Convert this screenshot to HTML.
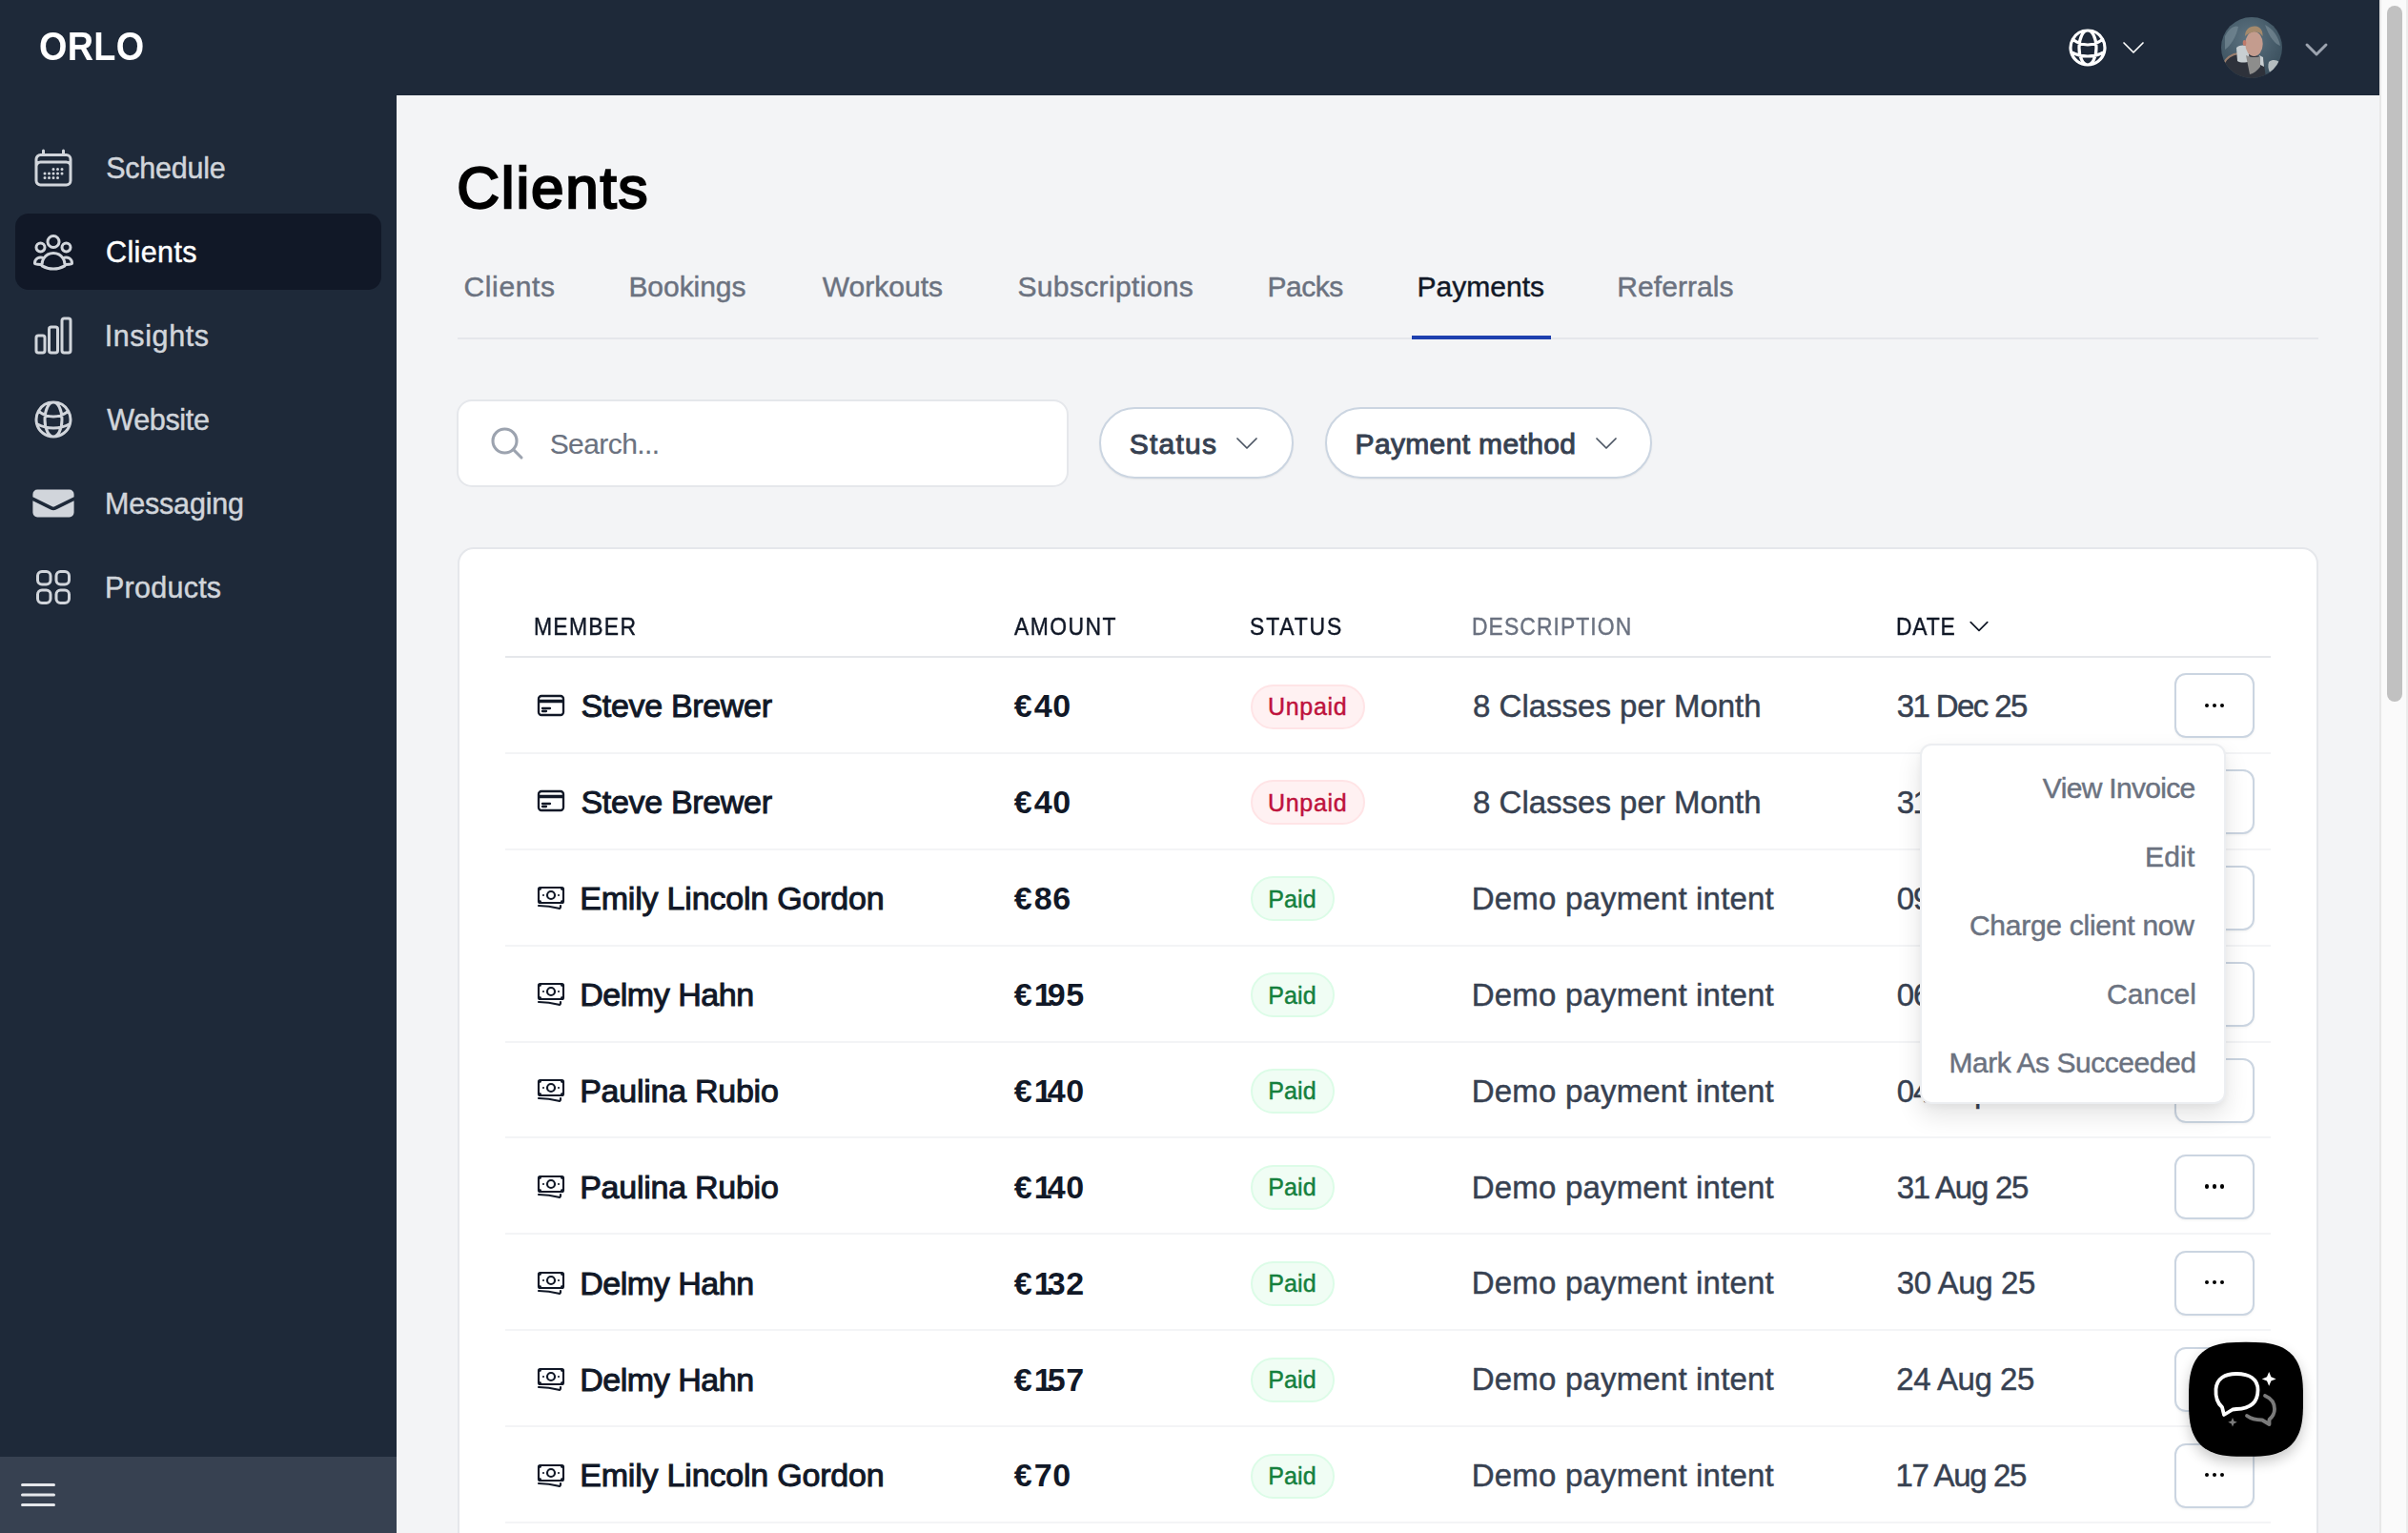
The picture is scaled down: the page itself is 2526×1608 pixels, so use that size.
<!DOCTYPE html><html><head><meta charset="utf-8"><style>
html,body{margin:0;padding:0;width:2526px;height:1608px;overflow:hidden;background:#f3f4f6;}
body{position:relative;font-family:"Liberation Sans",sans-serif;}
.t{position:absolute;white-space:nowrap;}
.i{position:absolute;display:block;overflow:visible;}
.b{position:absolute;box-sizing:border-box;}
</style></head><body>
<div class="b" style="left:0;top:0;width:2496px;height:100px;background:#1e2939"></div>
<div class="b" style="left:0;top:100px;width:416px;height:1508px;background:#1e2939"></div>
<div class="b" style="left:0;top:1528px;width:416px;height:80px;background:#374151"></div>
<svg class="i" style="left:16px;top:1544px;width:48px;height:48px;" viewBox="0 0 24 24" fill="none" stroke="#e5e7eb" stroke-width="1.5"><path stroke-linecap="round" stroke-linejoin="round" d="M3.75 6.75h16.5M3.75 12h16.5m-16.5 5.25h16.5"/></svg>
<div class="b" style="left:2496px;top:0;width:30px;height:1608px;background:#fafafa;border-left:2px solid #e8e8e8"></div>
<div class="b" style="left:2524px;top:0;width:2px;height:1608px;background:#ececec"></div>
<div class="b" style="left:2504px;top:6px;width:16px;height:730px;background:#c1c1c1;border-radius:8px"></div>
<div class="t" style="left:41.49px;top:28.45px;font-size:42px;line-height:42px;color:#ffffff;font-weight:700;letter-spacing:0.360px;transform:scaleX(0.9);transform-origin:0 0;">ORLO</div>
<svg class="i" style="left:32px;top:152px;width:48px;height:48px;" viewBox="0 0 24 24" fill="none" stroke="#d1d5db" stroke-width="1.5"><path stroke-linecap="round" stroke-linejoin="round" d="M6.75 3v2.25M17.25 3v2.25M3 18.75V7.5a2.25 2.25 0 0 1 2.25-2.25h13.5A2.25 2.25 0 0 1 21 7.5v11.25m-18 0A2.25 2.25 0 0 0 5.25 21h13.5A2.25 2.25 0 0 0 21 18.75m-18 0v-7.5A2.25 2.25 0 0 1 5.25 9h13.5A2.25 2.25 0 0 1 21 11.25v7.5m-9-6h.008v.008H12v-.008ZM12 15h.008v.008H12V15Zm0 2.25h.008v.008H12v-.008ZM9.75 15h.008v.008H9.75V15Zm0 2.25h.008v.008H9.75v-.008ZM7.5 15h.008v.008H7.5V15Zm0 2.25h.008v.008H7.5v-.008Zm6.75-4.5h.008v.008h-.008v-.008Zm0 2.25h.008v.008h-.008V15Zm0 2.25h.008v.008h-.008v-.008Zm2.25-4.5h.008v.008H16.5v-.008Zm0 2.25h.008v.008H16.5V15Z"/></svg>
<div class="t" style="left:111.13px;top:161.28px;font-size:30.5px;line-height:30.5px;color:#d1d5db;font-weight:400;letter-spacing:-0.217px;-webkit-text-stroke:0.45px currentColor;">Schedule</div>
<div class="b" style="left:16px;top:224px;width:384px;height:80px;background:#111827;border-radius:14px"></div>
<svg class="i" style="left:32px;top:240px;width:48px;height:48px;" viewBox="0 0 24 24" fill="none" stroke="#d1d5db" stroke-width="1.5"><path stroke-linecap="round" stroke-linejoin="round" d="M18 18.72a9.094 9.094 0 0 0 3.741-.479 3 3 0 0 0-4.682-2.72m.94 3.198.001.031c0 .225-.012.447-.037.666A11.944 11.944 0 0 1 12 21c-2.17 0-4.207-.576-5.963-1.584A6.062 6.062 0 0 1 6 18.719m12 0a5.971 5.971 0 0 0-.941-3.197m0 0A5.995 5.995 0 0 0 12 12.75a5.995 5.995 0 0 0-5.058 2.772m0 0a3 3 0 0 0-4.681 2.72 8.986 8.986 0 0 0 3.74.477m.94-3.197a5.971 5.971 0 0 0-.94 3.197M15 6.75a3 3 0 1 1-6 0 3 3 0 0 1 6 0Zm6 3a2.25 2.25 0 1 1-4.5 0 2.25 2.25 0 0 1 4.5 0Zm-13.5 0a2.25 2.25 0 1 1-4.5 0 2.25 2.25 0 0 1 4.5 0Z"/></svg>
<div class="t" style="left:110.97px;top:249.28px;font-size:30.5px;line-height:30.5px;color:#ffffff;font-weight:400;letter-spacing:0.390px;-webkit-text-stroke:0.45px currentColor;">Clients</div>
<svg class="i" style="left:32px;top:328px;width:48px;height:48px;" viewBox="0 0 24 24" fill="none" stroke="#d1d5db" stroke-width="1.5"><path stroke-linecap="round" stroke-linejoin="round" d="M3 13.125C3 12.504 3.504 12 4.125 12h2.25c.621 0 1.125.504 1.125 1.125v6.75C7.5 20.496 6.996 21 6.375 21h-2.25A1.125 1.125 0 0 1 3 19.875v-6.75ZM9.75 8.625c0-.621.504-1.125 1.125-1.125h2.25c.621 0 1.125.504 1.125 1.125v11.25c0 .621-.504 1.125-1.125 1.125h-2.25a1.125 1.125 0 0 1-1.125-1.125V8.625ZM16.5 4.125c0-.621.504-1.125 1.125-1.125h2.25C20.496 3 21 3.504 21 4.125v15.75c0 .621-.504 1.125-1.125 1.125h-2.25a1.125 1.125 0 0 1-1.125-1.125V4.125Z"/></svg>
<div class="t" style="left:109.68px;top:337.28px;font-size:30.5px;line-height:30.5px;color:#d1d5db;font-weight:400;letter-spacing:0.606px;-webkit-text-stroke:0.45px currentColor;">Insights</div>
<svg class="i" style="left:32px;top:416px;width:48px;height:48px;" viewBox="0 0 24 24" fill="none" stroke="#d1d5db" stroke-width="1.5"><path stroke-linecap="round" stroke-linejoin="round" d="M12 21a9.004 9.004 0 0 0 8.716-6.747M12 21a9.004 9.004 0 0 1-8.716-6.747M12 21c2.485 0 4.5-4.03 4.5-9S14.485 3 12 3m0 18c-2.485 0-4.5-4.03-4.5-9S9.515 3 12 3m0 0a8.997 8.997 0 0 1 7.843 4.582M12 3a8.997 8.997 0 0 0-7.843 4.582m15.686 0A11.953 11.953 0 0 1 12 10.5c-2.998 0-5.74-1.1-7.843-2.918m15.686 0A8.959 8.959 0 0 1 21 12c0 .778-.099 1.533-.284 2.253m0 0A17.919 17.919 0 0 1 12 16.5c-3.162 0-6.133-.815-8.716-2.247m0 0A9.015 9.015 0 0 1 3 12c0-1.605.42-3.113 1.157-4.418"/></svg>
<div class="t" style="left:112.35px;top:425.28px;font-size:30.5px;line-height:30.5px;color:#d1d5db;font-weight:400;letter-spacing:-0.354px;-webkit-text-stroke:0.45px currentColor;">Website</div>
<svg class="i" style="left:32px;top:504px;width:48px;height:48px" viewBox="0 0 20 20" fill="#d1d5db"><path d="M3 4a2 2 0 0 0-2 2v1.161l8.441 4.221a1.25 1.25 0 0 0 1.118 0L19 7.162V6a2 2 0 0 0-2-2H3Z"/><path d="m19 8.839-7.77 3.885a2.75 2.75 0 0 1-2.46 0L1 8.839V14a2 2 0 0 0 2 2h14a2 2 0 0 0 2-2V8.839Z"/></svg>
<div class="t" style="left:109.98px;top:513.28px;font-size:30.5px;line-height:30.5px;color:#d1d5db;font-weight:400;letter-spacing:-0.181px;-webkit-text-stroke:0.45px currentColor;">Messaging</div>
<svg class="i" style="left:32px;top:592px;width:48px;height:48px;" viewBox="0 0 24 24" fill="none" stroke="#d1d5db" stroke-width="1.5"><path stroke-linecap="round" stroke-linejoin="round" d="M3.75 6A2.25 2.25 0 0 1 6 3.75h2.25A2.25 2.25 0 0 1 10.5 6v2.25a2.25 2.25 0 0 1-2.25 2.25H6a2.25 2.25 0 0 1-2.25-2.25V6ZM3.75 15.75A2.25 2.25 0 0 1 6 13.5h2.25a2.25 2.25 0 0 1 2.25 2.25V18a2.25 2.25 0 0 1-2.25 2.25H6A2.25 2.25 0 0 1 3.75 18v-2.25ZM13.5 6a2.25 2.25 0 0 1 2.25-2.25H18A2.25 2.25 0 0 1 20.25 6v2.25A2.25 2.25 0 0 1 18 10.5h-2.25a2.25 2.25 0 0 1-2.25-2.25V6ZM13.5 15.75a2.25 2.25 0 0 1 2.25-2.25H18a2.25 2.25 0 0 1 2.25 2.25V18A2.25 2.25 0 0 1 18 20.25h-2.25A2.25 2.25 0 0 1 13.5 18v-2.25Z"/></svg>
<div class="t" style="left:109.98px;top:601.28px;font-size:30.5px;line-height:30.5px;color:#d1d5db;font-weight:400;letter-spacing:0.255px;-webkit-text-stroke:0.45px currentColor;">Products</div>
<svg class="i" style="left:2166px;top:26px;width:48px;height:48px;" viewBox="0 0 24 24" fill="none" stroke="#ffffff" stroke-width="1.6"><path stroke-linecap="round" stroke-linejoin="round" d="M12 21a9.004 9.004 0 0 0 8.716-6.747M12 21a9.004 9.004 0 0 1-8.716-6.747M12 21c2.485 0 4.5-4.03 4.5-9S14.485 3 12 3m0 18c-2.485 0-4.5-4.03-4.5-9S9.515 3 12 3m0 0a8.997 8.997 0 0 1 7.843 4.582M12 3a8.997 8.997 0 0 0-7.843 4.582m15.686 0A11.953 11.953 0 0 1 12 10.5c-2.998 0-5.74-1.1-7.843-2.918m15.686 0A8.959 8.959 0 0 1 21 12c0 .778-.099 1.533-.284 2.253m0 0A17.919 17.919 0 0 1 12 16.5c-3.162 0-6.133-.815-8.716-2.247m0 0A9.015 9.015 0 0 1 3 12c0-1.605.42-3.113 1.157-4.418"/></svg>
<svg class="i" style="left:2222px;top:34px;width:32px;height:32px;" viewBox="0 0 24 24" fill="none" stroke="#ffffff" stroke-width="1.25"><path stroke-linecap="round" stroke-linejoin="round" d="m19.5 8.25-7.5 7.5-7.5-7.5"/></svg>
<svg class="i" style="left:2330px;top:17.5px;width:64px;height:64px" viewBox="0 0 64 64">
<defs><clipPath id="cc"><circle cx="32" cy="32" r="32"/></clipPath>
<radialGradient id="bg" cx="0.45" cy="0.35" r="0.7"><stop offset="0" stop-color="#5d7381"/><stop offset="1" stop-color="#384d5b"/></radialGradient></defs>
<g clip-path="url(#cc)"><rect width="64" height="64" fill="url(#bg)"/>
<path d="M4 20 C8 12 14 8 18 10 C16 20 10 30 4 34Z" fill="#8196a0" opacity=".55"/>
<path d="M46 8 C54 12 60 20 62 30 C56 28 50 20 46 8Z" fill="#8a9ca5" opacity=".5"/>
<path d="M50 47 C54 44 58 45 61 47 C59 53 55 57 51 58 C49 54 49 50 50 47Z" fill="#b4bcbf"/>
<path d="M3 48 C6 42 12 39 18 38 L26 38 L44 42 L47 64 L0 64Z" fill="#2e323b"/>
<path d="M3 48 C6 42 12 39 18 38" stroke="#9b7f6e" stroke-width="2" fill="none"/>
<path d="M16 32 C20 29 24 29 28 31 L30 46 C26 48 20 48 17 46Z" fill="#c8cfd2"/>
<path d="M40 40 L44 42 L45 52 L41 50Z" fill="#c8cfd2"/>
<path d="M26 40 C30 42 36 43 41 41 L41 52 C38 56 34 59 30 60 L28 50Z" fill="#8d8d8c"/>
<ellipse cx="34.5" cy="28" rx="9.2" ry="13" fill="#c49c8e"/>
<path d="M25 20 C25 13 30 9 36 9.5 C41 10 44 14 43.5 20 C41 16 38 15 34 15.5 C30 16 27 18 25 20Z" fill="#a58a6c"/>
<ellipse cx="24.5" cy="27" rx="1.8" ry="3" fill="#c07a6a"/>
</g></svg>
<svg class="i" style="left:2414px;top:36px;width:32px;height:32px;" viewBox="0 0 24 24" fill="none" stroke="#9ca3af" stroke-width="2.2"><path stroke-linecap="round" stroke-linejoin="round" d="m19.5 8.25-7.5 7.5-7.5-7.5"/></svg>
<div class="t" style="left:479.30px;top:165.92px;font-size:62px;line-height:62px;color:#000000;font-weight:400;-webkit-text-stroke:1.0px currentColor;letter-spacing:1.784px;-webkit-text-stroke:2.3px currentColor;">Clients</div>
<div class="t" style="left:486.50px;top:285.61px;font-size:30px;line-height:30px;color:#6b7280;font-weight:400;letter-spacing:0.637px;-webkit-text-stroke:0.45px currentColor;">Clients</div>
<div class="t" style="left:659.42px;top:285.61px;font-size:30px;line-height:30px;color:#6b7280;font-weight:400;letter-spacing:-0.046px;-webkit-text-stroke:0.45px currentColor;">Bookings</div>
<div class="t" style="left:862.75px;top:285.61px;font-size:30px;line-height:30px;color:#6b7280;font-weight:400;letter-spacing:0.021px;-webkit-text-stroke:0.45px currentColor;">Workouts</div>
<div class="t" style="left:1067.45px;top:285.61px;font-size:30px;line-height:30px;color:#6b7280;font-weight:400;letter-spacing:0.360px;-webkit-text-stroke:0.45px currentColor;">Subscriptions</div>
<div class="t" style="left:1329.43px;top:285.61px;font-size:30px;line-height:30px;color:#6b7280;font-weight:400;letter-spacing:-0.438px;-webkit-text-stroke:0.45px currentColor;">Packs</div>
<div class="t" style="left:1486.53px;top:285.61px;font-size:30px;line-height:30px;color:#111827;font-weight:400;letter-spacing:0.014px;-webkit-text-stroke:0.45px currentColor;">Payments</div>
<div class="t" style="left:1696.23px;top:285.61px;font-size:30px;line-height:30px;color:#6b7280;font-weight:400;letter-spacing:0.075px;-webkit-text-stroke:0.45px currentColor;">Referrals</div>
<div class="b" style="left:480px;top:354px;width:1952px;height:2px;background:#e5e7eb"></div>
<div class="b" style="left:1481px;top:352px;width:146px;height:4px;background:#1e40af"></div>
<div class="b" style="left:479px;top:419px;width:642px;height:92px;background:#fff;border:2px solid #e5e7eb;border-radius:16px"></div>
<svg class="i" style="left:512px;top:445px;width:40px;height:40px;" viewBox="0 0 24 24" fill="none" stroke="#9ca3af" stroke-width="1.85"><path stroke-linecap="round" stroke-linejoin="round" d="m21 21-5.197-5.197m0 0A7.5 7.5 0 1 0 5.196 5.196a7.5 7.5 0 0 0 10.607 10.607Z"/></svg>
<div class="t" style="left:576.65px;top:450.61px;font-size:30px;line-height:30px;color:#6b7280;font-weight:400;letter-spacing:-0.566px;-webkit-text-stroke:0.45px currentColor;-webkit-text-stroke:0.15px currentColor;">Search...</div>
<div class="b" style="left:1153px;top:427px;width:204px;height:75px;background:#fff;border:2px solid #cbd5e1;border-radius:38px;box-shadow:0 1px 2px rgba(0,0,0,.06)"></div>
<div class="t" style="left:1184.65px;top:451.11px;font-size:30px;line-height:30px;color:#374151;font-weight:400;-webkit-text-stroke:1.0px currentColor;letter-spacing:1.270px;">Status</div>
<svg class="i" style="left:1292px;top:449px;width:32px;height:32px;" viewBox="0 0 24 24" fill="none" stroke="#4b5563" stroke-width="1.3"><path stroke-linecap="round" stroke-linejoin="round" d="m19.5 8.25-7.5 7.5-7.5-7.5"/></svg>
<div class="b" style="left:1390px;top:427px;width:343px;height:75px;background:#fff;border:2px solid #cbd5e1;border-radius:38px;box-shadow:0 1px 2px rgba(0,0,0,.06)"></div>
<div class="t" style="left:1421.53px;top:451.11px;font-size:30px;line-height:30px;color:#374151;font-weight:400;-webkit-text-stroke:1.0px currentColor;letter-spacing:0.356px;">Payment method</div>
<svg class="i" style="left:1669px;top:449px;width:32px;height:32px;" viewBox="0 0 24 24" fill="none" stroke="#4b5563" stroke-width="1.3"><path stroke-linecap="round" stroke-linejoin="round" d="m19.5 8.25-7.5 7.5-7.5-7.5"/></svg>
<div class="b" style="left:480px;top:574px;width:1952px;height:1100px;background:#fff;border:2px solid #e5e7eb;border-radius:17px"></div>
<div class="t" style="left:560.11px;top:643.99px;font-size:26px;line-height:26px;color:#111827;font-weight:400;letter-spacing:1.484px;transform:scaleX(0.88);transform-origin:0 0;-webkit-text-stroke:0.45px currentColor;">MEMBER</div>
<div class="t" style="left:1063.94px;top:643.99px;font-size:26px;line-height:26px;color:#111827;font-weight:400;letter-spacing:1.692px;transform:scaleX(0.88);transform-origin:0 0;-webkit-text-stroke:0.45px currentColor;">AMOUNT</div>
<div class="t" style="left:1311.17px;top:643.99px;font-size:26px;line-height:26px;color:#111827;font-weight:400;letter-spacing:2.130px;transform:scaleX(0.88);transform-origin:0 0;-webkit-text-stroke:0.45px currentColor;">STATUS</div>
<div class="t" style="left:1544.11px;top:643.99px;font-size:26px;line-height:26px;color:#6b7280;font-weight:400;letter-spacing:1.226px;transform:scaleX(0.88);transform-origin:0 0;-webkit-text-stroke:0.45px currentColor;">DESCRIPTION</div>
<div class="t" style="left:1989.11px;top:643.99px;font-size:26px;line-height:26px;color:#111827;font-weight:400;letter-spacing:0.963px;transform:scaleX(0.88);transform-origin:0 0;-webkit-text-stroke:0.45px currentColor;">DATE</div>
<svg class="i" style="left:2062px;top:643px;width:28px;height:28px;" viewBox="0 0 24 24" fill="none" stroke="#111827" stroke-width="1.5"><path stroke-linecap="round" stroke-linejoin="round" d="m19.5 8.25-7.5 7.5-7.5-7.5"/></svg>
<div class="b" style="left:530px;top:688px;width:1852px;height:2px;background:#e5e7eb"></div>
<svg class="i" style="left:562px;top:723.5px;width:32px;height:32px;" viewBox="0 0 24 24" fill="none" stroke="#111827" stroke-width="1.75"><path stroke-linecap="round" stroke-linejoin="round" d="M2.25 8.25h19.5M2.25 9h19.5m-16.5 5.25h6m-6 2.25h3m-3.75 3h15a2.25 2.25 0 0 0 2.25-2.25V6.75A2.25 2.25 0 0 0 19.5 4.5h-15a2.25 2.25 0 0 0-2.25 2.25v10.5A2.25 2.25 0 0 0 4.5 19.5Z"/></svg>
<div class="t" style="left:609.47px;top:723.22px;font-size:34px;line-height:34px;color:#111827;font-weight:400;-webkit-text-stroke:1.0px currentColor;letter-spacing:-0.322px;">Steve Brewer</div>
<div class="t" style="left:1063.83px;top:723.22px;font-size:34px;line-height:34px;color:#111827;font-weight:700;letter-spacing:0.6px;"><span style="letter-spacing:2.1px">€</span>40</div>
<div class="b" style="left:1312px;top:717.5px;width:120px;height:47px;background:#fff1f2;border:2px solid #ffe4e6;border-radius:24px"></div>
<div class="t" style="left:1330.06px;top:728.84px;font-size:25px;line-height:25px;color:#be123c;font-weight:400;letter-spacing:0.662px;-webkit-text-stroke:0.45px currentColor;">Unpaid</div>
<div class="t" style="left:1545.10px;top:724.07px;font-size:33px;line-height:33px;color:#374151;font-weight:400;letter-spacing:-0.008px;-webkit-text-stroke:0.45px currentColor;">8 Classes per Month</div>
<div class="t" style="left:1989.76px;top:724.07px;font-size:33px;line-height:33px;color:#374151;font-weight:400;letter-spacing:-1.605px;-webkit-text-stroke:0.45px currentColor;">31 Dec 25</div>
<div class="b" style="left:2281px;top:706.4px;width:84px;height:68px;background:#fff;border:2px solid #cbd5e1;border-radius:12px;box-shadow:0 1px 3px rgba(0,0,0,.05)"></div>
<div class="b" style="left:2312.90px;top:737.9px;width:4.2px;height:4.2px;background:#000;border-radius:50%"></div>
<div class="b" style="left:2320.98px;top:737.9px;width:4.2px;height:4.2px;background:#000;border-radius:50%"></div>
<div class="b" style="left:2329.06px;top:737.9px;width:4.2px;height:4.2px;background:#000;border-radius:50%"></div>
<div class="b" style="left:530px;top:788.8px;width:1852px;height:2px;background:#f3f4f6"></div>
<svg class="i" style="left:562px;top:824.4px;width:32px;height:32px;" viewBox="0 0 24 24" fill="none" stroke="#111827" stroke-width="1.75"><path stroke-linecap="round" stroke-linejoin="round" d="M2.25 8.25h19.5M2.25 9h19.5m-16.5 5.25h6m-6 2.25h3m-3.75 3h15a2.25 2.25 0 0 0 2.25-2.25V6.75A2.25 2.25 0 0 0 19.5 4.5h-15a2.25 2.25 0 0 0-2.25 2.25v10.5A2.25 2.25 0 0 0 4.5 19.5Z"/></svg>
<div class="t" style="left:609.47px;top:824.12px;font-size:34px;line-height:34px;color:#111827;font-weight:400;-webkit-text-stroke:1.0px currentColor;letter-spacing:-0.322px;">Steve Brewer</div>
<div class="t" style="left:1063.83px;top:824.12px;font-size:34px;line-height:34px;color:#111827;font-weight:700;letter-spacing:0.6px;"><span style="letter-spacing:2.1px">€</span>40</div>
<div class="b" style="left:1312px;top:818.4px;width:120px;height:47px;background:#fff1f2;border:2px solid #ffe4e6;border-radius:24px"></div>
<div class="t" style="left:1330.06px;top:829.74px;font-size:25px;line-height:25px;color:#be123c;font-weight:400;letter-spacing:0.662px;-webkit-text-stroke:0.45px currentColor;">Unpaid</div>
<div class="t" style="left:1545.10px;top:824.97px;font-size:33px;line-height:33px;color:#374151;font-weight:400;letter-spacing:-0.008px;-webkit-text-stroke:0.45px currentColor;">8 Classes per Month</div>
<div class="t" style="left:1989.76px;top:824.97px;font-size:33px;line-height:33px;color:#374151;font-weight:400;letter-spacing:-1.605px;-webkit-text-stroke:0.45px currentColor;">31 Dec 25</div>
<div class="b" style="left:2281px;top:807.3px;width:84px;height:68px;background:#fff;border:2px solid #cbd5e1;border-radius:12px;box-shadow:0 1px 3px rgba(0,0,0,.05)"></div>
<div class="b" style="left:2312.90px;top:838.8px;width:4.2px;height:4.2px;background:#000;border-radius:50%"></div>
<div class="b" style="left:2320.98px;top:838.8px;width:4.2px;height:4.2px;background:#000;border-radius:50%"></div>
<div class="b" style="left:2329.06px;top:838.8px;width:4.2px;height:4.2px;background:#000;border-radius:50%"></div>
<div class="b" style="left:530px;top:889.7px;width:1852px;height:2px;background:#f3f4f6"></div>
<svg class="i" style="left:562px;top:925.3px;width:32px;height:32px;" viewBox="0 0 24 24" fill="none" stroke="#111827" stroke-width="1.6"><path stroke-linecap="round" stroke-linejoin="round" d="M2.25 18.75a60.07 60.07 0 0 1 15.797 2.101c.727.198 1.453-.342 1.453-1.096V18.75M3.75 4.5v.75A.75.75 0 0 1 3 6h-.75m0 0v-.375c0-.621.504-1.125 1.125-1.125H20.25M2.25 6v9m18-10.5v.75c0 .414.336.75.75.75h.75m-1.5-1.5h.375c.621 0 1.125.504 1.125 1.125v9.75c0 .621-.504 1.125-1.125 1.125h-.375m1.5-1.5H21a.75.75 0 0 0-.75.75v.75m0 0H3.75m0 0h-.375a1.125 1.125 0 0 1-1.125-1.125V15m1.5 1.5v-.75A.75.75 0 0 0 3 15h-.75M15 10.5a3 3 0 1 1-6 0 3 3 0 0 1 6 0Zm3 0h.008v.008H18V10.5Zm-12 0h.008v.008H6V10.5Z"/></svg>
<div class="t" style="left:608.20px;top:925.02px;font-size:34px;line-height:34px;color:#111827;font-weight:400;-webkit-text-stroke:1.0px currentColor;letter-spacing:-0.192px;">Emily Lincoln Gordon</div>
<div class="t" style="left:1063.83px;top:925.02px;font-size:34px;line-height:34px;color:#111827;font-weight:700;letter-spacing:0.6px;"><span style="letter-spacing:2.1px">€</span>86</div>
<div class="b" style="left:1312px;top:919.3px;width:88px;height:47px;background:#f0fdf4;border:2px solid #dcfce7;border-radius:24px"></div>
<div class="t" style="left:1330.34px;top:930.64px;font-size:25px;line-height:25px;color:#15803d;font-weight:400;letter-spacing:0.075px;-webkit-text-stroke:0.45px currentColor;">Paid</div>
<div class="t" style="left:1543.78px;top:925.87px;font-size:33px;line-height:33px;color:#374151;font-weight:400;letter-spacing:0.184px;-webkit-text-stroke:0.45px currentColor;">Demo payment intent</div>
<div class="t" style="left:1989.68px;top:925.87px;font-size:33px;line-height:33px;color:#374151;font-weight:400;letter-spacing:-0.970px;-webkit-text-stroke:0.45px currentColor;">09 Sep 25</div>
<div class="b" style="left:2281px;top:908.2px;width:84px;height:68px;background:#fff;border:2px solid #cbd5e1;border-radius:12px;box-shadow:0 1px 3px rgba(0,0,0,.05)"></div>
<div class="b" style="left:2312.90px;top:939.7px;width:4.2px;height:4.2px;background:#000;border-radius:50%"></div>
<div class="b" style="left:2320.98px;top:939.7px;width:4.2px;height:4.2px;background:#000;border-radius:50%"></div>
<div class="b" style="left:2329.06px;top:939.7px;width:4.2px;height:4.2px;background:#000;border-radius:50%"></div>
<div class="b" style="left:530px;top:990.6px;width:1852px;height:2px;background:#f3f4f6"></div>
<svg class="i" style="left:562px;top:1026.2px;width:32px;height:32px;" viewBox="0 0 24 24" fill="none" stroke="#111827" stroke-width="1.6"><path stroke-linecap="round" stroke-linejoin="round" d="M2.25 18.75a60.07 60.07 0 0 1 15.797 2.101c.727.198 1.453-.342 1.453-1.096V18.75M3.75 4.5v.75A.75.75 0 0 1 3 6h-.75m0 0v-.375c0-.621.504-1.125 1.125-1.125H20.25M2.25 6v9m18-10.5v.75c0 .414.336.75.75.75h.75m-1.5-1.5h.375c.621 0 1.125.504 1.125 1.125v9.75c0 .621-.504 1.125-1.125 1.125h-.375m1.5-1.5H21a.75.75 0 0 0-.75.75v.75m0 0H3.75m0 0h-.375a1.125 1.125 0 0 1-1.125-1.125V15m1.5 1.5v-.75A.75.75 0 0 0 3 15h-.75M15 10.5a3 3 0 1 1-6 0 3 3 0 0 1 6 0Zm3 0h.008v.008H18V10.5Zm-12 0h.008v.008H6V10.5Z"/></svg>
<div class="t" style="left:608.20px;top:1025.92px;font-size:34px;line-height:34px;color:#111827;font-weight:400;-webkit-text-stroke:1.0px currentColor;letter-spacing:-0.452px;">Delmy Hahn</div>
<div class="t" style="left:1063.83px;top:1025.92px;font-size:34px;line-height:34px;color:#111827;font-weight:700;letter-spacing:0.6px;"><span style="letter-spacing:2.1px">€</span><span style="letter-spacing:-4.9px">1</span>95</div>
<div class="b" style="left:1312px;top:1020.2px;width:88px;height:47px;background:#f0fdf4;border:2px solid #dcfce7;border-radius:24px"></div>
<div class="t" style="left:1330.34px;top:1031.54px;font-size:25px;line-height:25px;color:#15803d;font-weight:400;letter-spacing:0.075px;-webkit-text-stroke:0.45px currentColor;">Paid</div>
<div class="t" style="left:1543.78px;top:1026.77px;font-size:33px;line-height:33px;color:#374151;font-weight:400;letter-spacing:0.184px;-webkit-text-stroke:0.45px currentColor;">Demo payment intent</div>
<div class="t" style="left:1989.68px;top:1026.77px;font-size:33px;line-height:33px;color:#374151;font-weight:400;letter-spacing:-0.970px;-webkit-text-stroke:0.45px currentColor;">06 Sep 25</div>
<div class="b" style="left:2281px;top:1009.1px;width:84px;height:68px;background:#fff;border:2px solid #cbd5e1;border-radius:12px;box-shadow:0 1px 3px rgba(0,0,0,.05)"></div>
<div class="b" style="left:2312.90px;top:1040.6px;width:4.2px;height:4.2px;background:#000;border-radius:50%"></div>
<div class="b" style="left:2320.98px;top:1040.6px;width:4.2px;height:4.2px;background:#000;border-radius:50%"></div>
<div class="b" style="left:2329.06px;top:1040.6px;width:4.2px;height:4.2px;background:#000;border-radius:50%"></div>
<div class="b" style="left:530px;top:1091.5px;width:1852px;height:2px;background:#f3f4f6"></div>
<svg class="i" style="left:562px;top:1127.1px;width:32px;height:32px;" viewBox="0 0 24 24" fill="none" stroke="#111827" stroke-width="1.6"><path stroke-linecap="round" stroke-linejoin="round" d="M2.25 18.75a60.07 60.07 0 0 1 15.797 2.101c.727.198 1.453-.342 1.453-1.096V18.75M3.75 4.5v.75A.75.75 0 0 1 3 6h-.75m0 0v-.375c0-.621.504-1.125 1.125-1.125H20.25M2.25 6v9m18-10.5v.75c0 .414.336.75.75.75h.75m-1.5-1.5h.375c.621 0 1.125.504 1.125 1.125v9.75c0 .621-.504 1.125-1.125 1.125h-.375m1.5-1.5H21a.75.75 0 0 0-.75.75v.75m0 0H3.75m0 0h-.375a1.125 1.125 0 0 1-1.125-1.125V15m1.5 1.5v-.75A.75.75 0 0 0 3 15h-.75M15 10.5a3 3 0 1 1-6 0 3 3 0 0 1 6 0Zm3 0h.008v.008H18V10.5Zm-12 0h.008v.008H6V10.5Z"/></svg>
<div class="t" style="left:608.20px;top:1126.82px;font-size:34px;line-height:34px;color:#111827;font-weight:400;-webkit-text-stroke:1.0px currentColor;letter-spacing:-0.257px;">Paulina Rubio</div>
<div class="t" style="left:1063.83px;top:1126.82px;font-size:34px;line-height:34px;color:#111827;font-weight:700;letter-spacing:0.6px;"><span style="letter-spacing:2.1px">€</span><span style="letter-spacing:-4.9px">1</span>40</div>
<div class="b" style="left:1312px;top:1121.1px;width:88px;height:47px;background:#f0fdf4;border:2px solid #dcfce7;border-radius:24px"></div>
<div class="t" style="left:1330.34px;top:1132.44px;font-size:25px;line-height:25px;color:#15803d;font-weight:400;letter-spacing:0.075px;-webkit-text-stroke:0.45px currentColor;">Paid</div>
<div class="t" style="left:1543.78px;top:1127.67px;font-size:33px;line-height:33px;color:#374151;font-weight:400;letter-spacing:0.184px;-webkit-text-stroke:0.45px currentColor;">Demo payment intent</div>
<div class="t" style="left:1989.68px;top:1127.67px;font-size:33px;line-height:33px;color:#374151;font-weight:400;letter-spacing:-0.970px;-webkit-text-stroke:0.45px currentColor;">04 Sep 25</div>
<div class="b" style="left:2281px;top:1110.0px;width:84px;height:68px;background:#fff;border:2px solid #cbd5e1;border-radius:12px;box-shadow:0 1px 3px rgba(0,0,0,.05)"></div>
<div class="b" style="left:2312.90px;top:1141.5px;width:4.2px;height:4.2px;background:#000;border-radius:50%"></div>
<div class="b" style="left:2320.98px;top:1141.5px;width:4.2px;height:4.2px;background:#000;border-radius:50%"></div>
<div class="b" style="left:2329.06px;top:1141.5px;width:4.2px;height:4.2px;background:#000;border-radius:50%"></div>
<div class="b" style="left:530px;top:1192.4px;width:1852px;height:2px;background:#f3f4f6"></div>
<svg class="i" style="left:562px;top:1228.0px;width:32px;height:32px;" viewBox="0 0 24 24" fill="none" stroke="#111827" stroke-width="1.6"><path stroke-linecap="round" stroke-linejoin="round" d="M2.25 18.75a60.07 60.07 0 0 1 15.797 2.101c.727.198 1.453-.342 1.453-1.096V18.75M3.75 4.5v.75A.75.75 0 0 1 3 6h-.75m0 0v-.375c0-.621.504-1.125 1.125-1.125H20.25M2.25 6v9m18-10.5v.75c0 .414.336.75.75.75h.75m-1.5-1.5h.375c.621 0 1.125.504 1.125 1.125v9.75c0 .621-.504 1.125-1.125 1.125h-.375m1.5-1.5H21a.75.75 0 0 0-.75.75v.75m0 0H3.75m0 0h-.375a1.125 1.125 0 0 1-1.125-1.125V15m1.5 1.5v-.75A.75.75 0 0 0 3 15h-.75M15 10.5a3 3 0 1 1-6 0 3 3 0 0 1 6 0Zm3 0h.008v.008H18V10.5Zm-12 0h.008v.008H6V10.5Z"/></svg>
<div class="t" style="left:608.20px;top:1227.72px;font-size:34px;line-height:34px;color:#111827;font-weight:400;-webkit-text-stroke:1.0px currentColor;letter-spacing:-0.257px;">Paulina Rubio</div>
<div class="t" style="left:1063.83px;top:1227.72px;font-size:34px;line-height:34px;color:#111827;font-weight:700;letter-spacing:0.6px;"><span style="letter-spacing:2.1px">€</span><span style="letter-spacing:-4.9px">1</span>40</div>
<div class="b" style="left:1312px;top:1222.0px;width:88px;height:47px;background:#f0fdf4;border:2px solid #dcfce7;border-radius:24px"></div>
<div class="t" style="left:1330.34px;top:1233.34px;font-size:25px;line-height:25px;color:#15803d;font-weight:400;letter-spacing:0.075px;-webkit-text-stroke:0.45px currentColor;">Paid</div>
<div class="t" style="left:1543.78px;top:1228.57px;font-size:33px;line-height:33px;color:#374151;font-weight:400;letter-spacing:0.184px;-webkit-text-stroke:0.45px currentColor;">Demo payment intent</div>
<div class="t" style="left:1989.76px;top:1228.57px;font-size:33px;line-height:33px;color:#374151;font-weight:400;letter-spacing:-1.253px;-webkit-text-stroke:0.45px currentColor;">31 Aug 25</div>
<div class="b" style="left:2281px;top:1210.9px;width:84px;height:68px;background:#fff;border:2px solid #cbd5e1;border-radius:12px;box-shadow:0 1px 3px rgba(0,0,0,.05)"></div>
<div class="b" style="left:2312.90px;top:1242.4px;width:4.2px;height:4.2px;background:#000;border-radius:50%"></div>
<div class="b" style="left:2320.98px;top:1242.4px;width:4.2px;height:4.2px;background:#000;border-radius:50%"></div>
<div class="b" style="left:2329.06px;top:1242.4px;width:4.2px;height:4.2px;background:#000;border-radius:50%"></div>
<div class="b" style="left:530px;top:1293.3px;width:1852px;height:2px;background:#f3f4f6"></div>
<svg class="i" style="left:562px;top:1328.9px;width:32px;height:32px;" viewBox="0 0 24 24" fill="none" stroke="#111827" stroke-width="1.6"><path stroke-linecap="round" stroke-linejoin="round" d="M2.25 18.75a60.07 60.07 0 0 1 15.797 2.101c.727.198 1.453-.342 1.453-1.096V18.75M3.75 4.5v.75A.75.75 0 0 1 3 6h-.75m0 0v-.375c0-.621.504-1.125 1.125-1.125H20.25M2.25 6v9m18-10.5v.75c0 .414.336.75.75.75h.75m-1.5-1.5h.375c.621 0 1.125.504 1.125 1.125v9.75c0 .621-.504 1.125-1.125 1.125h-.375m1.5-1.5H21a.75.75 0 0 0-.75.75v.75m0 0H3.75m0 0h-.375a1.125 1.125 0 0 1-1.125-1.125V15m1.5 1.5v-.75A.75.75 0 0 0 3 15h-.75M15 10.5a3 3 0 1 1-6 0 3 3 0 0 1 6 0Zm3 0h.008v.008H18V10.5Zm-12 0h.008v.008H6V10.5Z"/></svg>
<div class="t" style="left:608.20px;top:1328.62px;font-size:34px;line-height:34px;color:#111827;font-weight:400;-webkit-text-stroke:1.0px currentColor;letter-spacing:-0.452px;">Delmy Hahn</div>
<div class="t" style="left:1063.83px;top:1328.62px;font-size:34px;line-height:34px;color:#111827;font-weight:700;letter-spacing:0.6px;"><span style="letter-spacing:2.1px">€</span><span style="letter-spacing:-4.9px">1</span>32</div>
<div class="b" style="left:1312px;top:1322.9px;width:88px;height:47px;background:#f0fdf4;border:2px solid #dcfce7;border-radius:24px"></div>
<div class="t" style="left:1330.34px;top:1334.24px;font-size:25px;line-height:25px;color:#15803d;font-weight:400;letter-spacing:0.075px;-webkit-text-stroke:0.45px currentColor;">Paid</div>
<div class="t" style="left:1543.78px;top:1329.47px;font-size:33px;line-height:33px;color:#374151;font-weight:400;letter-spacing:0.184px;-webkit-text-stroke:0.45px currentColor;">Demo payment intent</div>
<div class="t" style="left:1989.76px;top:1329.47px;font-size:33px;line-height:33px;color:#374151;font-weight:400;letter-spacing:-0.378px;-webkit-text-stroke:0.45px currentColor;">30 Aug 25</div>
<div class="b" style="left:2281px;top:1311.8px;width:84px;height:68px;background:#fff;border:2px solid #cbd5e1;border-radius:12px;box-shadow:0 1px 3px rgba(0,0,0,.05)"></div>
<div class="b" style="left:2312.90px;top:1343.3px;width:4.2px;height:4.2px;background:#000;border-radius:50%"></div>
<div class="b" style="left:2320.98px;top:1343.3px;width:4.2px;height:4.2px;background:#000;border-radius:50%"></div>
<div class="b" style="left:2329.06px;top:1343.3px;width:4.2px;height:4.2px;background:#000;border-radius:50%"></div>
<div class="b" style="left:530px;top:1394.2px;width:1852px;height:2px;background:#f3f4f6"></div>
<svg class="i" style="left:562px;top:1429.8000000000002px;width:32px;height:32px;" viewBox="0 0 24 24" fill="none" stroke="#111827" stroke-width="1.6"><path stroke-linecap="round" stroke-linejoin="round" d="M2.25 18.75a60.07 60.07 0 0 1 15.797 2.101c.727.198 1.453-.342 1.453-1.096V18.75M3.75 4.5v.75A.75.75 0 0 1 3 6h-.75m0 0v-.375c0-.621.504-1.125 1.125-1.125H20.25M2.25 6v9m18-10.5v.75c0 .414.336.75.75.75h.75m-1.5-1.5h.375c.621 0 1.125.504 1.125 1.125v9.75c0 .621-.504 1.125-1.125 1.125h-.375m1.5-1.5H21a.75.75 0 0 0-.75.75v.75m0 0H3.75m0 0h-.375a1.125 1.125 0 0 1-1.125-1.125V15m1.5 1.5v-.75A.75.75 0 0 0 3 15h-.75M15 10.5a3 3 0 1 1-6 0 3 3 0 0 1 6 0Zm3 0h.008v.008H18V10.5Zm-12 0h.008v.008H6V10.5Z"/></svg>
<div class="t" style="left:608.20px;top:1429.52px;font-size:34px;line-height:34px;color:#111827;font-weight:400;-webkit-text-stroke:1.0px currentColor;letter-spacing:-0.452px;">Delmy Hahn</div>
<div class="t" style="left:1063.83px;top:1429.52px;font-size:34px;line-height:34px;color:#111827;font-weight:700;letter-spacing:0.6px;"><span style="letter-spacing:2.1px">€</span><span style="letter-spacing:-4.9px">1</span>57</div>
<div class="b" style="left:1312px;top:1423.8px;width:88px;height:47px;background:#f0fdf4;border:2px solid #dcfce7;border-radius:24px"></div>
<div class="t" style="left:1330.34px;top:1435.14px;font-size:25px;line-height:25px;color:#15803d;font-weight:400;letter-spacing:0.075px;-webkit-text-stroke:0.45px currentColor;">Paid</div>
<div class="t" style="left:1543.78px;top:1430.37px;font-size:33px;line-height:33px;color:#374151;font-weight:400;letter-spacing:0.184px;-webkit-text-stroke:0.45px currentColor;">Demo payment intent</div>
<div class="t" style="left:1989.35px;top:1430.37px;font-size:33px;line-height:33px;color:#374151;font-weight:400;letter-spacing:-0.452px;-webkit-text-stroke:0.45px currentColor;">24 Aug 25</div>
<div class="b" style="left:2281px;top:1412.7px;width:84px;height:68px;background:#fff;border:2px solid #cbd5e1;border-radius:12px;box-shadow:0 1px 3px rgba(0,0,0,.05)"></div>
<div class="b" style="left:2312.90px;top:1444.2px;width:4.2px;height:4.2px;background:#000;border-radius:50%"></div>
<div class="b" style="left:2320.98px;top:1444.2px;width:4.2px;height:4.2px;background:#000;border-radius:50%"></div>
<div class="b" style="left:2329.06px;top:1444.2px;width:4.2px;height:4.2px;background:#000;border-radius:50%"></div>
<div class="b" style="left:530px;top:1495.1px;width:1852px;height:2px;background:#f3f4f6"></div>
<svg class="i" style="left:562px;top:1530.7px;width:32px;height:32px;" viewBox="0 0 24 24" fill="none" stroke="#111827" stroke-width="1.6"><path stroke-linecap="round" stroke-linejoin="round" d="M2.25 18.75a60.07 60.07 0 0 1 15.797 2.101c.727.198 1.453-.342 1.453-1.096V18.75M3.75 4.5v.75A.75.75 0 0 1 3 6h-.75m0 0v-.375c0-.621.504-1.125 1.125-1.125H20.25M2.25 6v9m18-10.5v.75c0 .414.336.75.75.75h.75m-1.5-1.5h.375c.621 0 1.125.504 1.125 1.125v9.75c0 .621-.504 1.125-1.125 1.125h-.375m1.5-1.5H21a.75.75 0 0 0-.75.75v.75m0 0H3.75m0 0h-.375a1.125 1.125 0 0 1-1.125-1.125V15m1.5 1.5v-.75A.75.75 0 0 0 3 15h-.75M15 10.5a3 3 0 1 1-6 0 3 3 0 0 1 6 0Zm3 0h.008v.008H18V10.5Zm-12 0h.008v.008H6V10.5Z"/></svg>
<div class="t" style="left:608.20px;top:1530.42px;font-size:34px;line-height:34px;color:#111827;font-weight:400;-webkit-text-stroke:1.0px currentColor;letter-spacing:-0.192px;">Emily Lincoln Gordon</div>
<div class="t" style="left:1063.83px;top:1530.42px;font-size:34px;line-height:34px;color:#111827;font-weight:700;letter-spacing:0.6px;"><span style="letter-spacing:2.1px">€</span>70</div>
<div class="b" style="left:1312px;top:1524.7px;width:88px;height:47px;background:#f0fdf4;border:2px solid #dcfce7;border-radius:24px"></div>
<div class="t" style="left:1330.34px;top:1536.04px;font-size:25px;line-height:25px;color:#15803d;font-weight:400;letter-spacing:0.075px;-webkit-text-stroke:0.45px currentColor;">Paid</div>
<div class="t" style="left:1543.78px;top:1531.27px;font-size:33px;line-height:33px;color:#374151;font-weight:400;letter-spacing:0.184px;-webkit-text-stroke:0.45px currentColor;">Demo payment intent</div>
<div class="t" style="left:1988.53px;top:1531.27px;font-size:33px;line-height:33px;color:#374151;font-weight:400;letter-spacing:-1.348px;-webkit-text-stroke:0.45px currentColor;">17 Aug 25</div>
<div class="b" style="left:2281px;top:1513.6px;width:84px;height:68px;background:#fff;border:2px solid #cbd5e1;border-radius:12px;box-shadow:0 1px 3px rgba(0,0,0,.05)"></div>
<div class="b" style="left:2312.90px;top:1545.1px;width:4.2px;height:4.2px;background:#000;border-radius:50%"></div>
<div class="b" style="left:2320.98px;top:1545.1px;width:4.2px;height:4.2px;background:#000;border-radius:50%"></div>
<div class="b" style="left:2329.06px;top:1545.1px;width:4.2px;height:4.2px;background:#000;border-radius:50%"></div>
<div class="b" style="left:530px;top:1596.0px;width:1852px;height:2px;background:#f3f4f6"></div>
<div class="b" style="left:2014px;top:780px;width:321px;height:378px;background:#fff;border:2px solid #eceef1;border-radius:12px;box-shadow:0 12px 26px rgba(0,0,0,.11),0 3px 6px rgba(0,0,0,.04)"></div>
<div class="t" style="left:2142.85px;top:812.11px;font-size:30px;line-height:30px;color:#6b7280;font-weight:400;letter-spacing:-0.675px;-webkit-text-stroke:0.45px currentColor;">View Invoice</div>
<div class="t" style="left:2250.12px;top:884.11px;font-size:30px;line-height:30px;color:#6b7280;font-weight:400;letter-spacing:0.142px;-webkit-text-stroke:0.45px currentColor;">Edit</div>
<div class="t" style="left:2065.90px;top:956.11px;font-size:30px;line-height:30px;color:#6b7280;font-weight:400;letter-spacing:-0.258px;-webkit-text-stroke:0.45px currentColor;">Charge client now</div>
<div class="t" style="left:2210.00px;top:1028.11px;font-size:30px;line-height:30px;color:#6b7280;font-weight:400;letter-spacing:0.130px;-webkit-text-stroke:0.45px currentColor;">Cancel</div>
<div class="t" style="left:2044.53px;top:1100.11px;font-size:30px;line-height:30px;color:#6b7280;font-weight:400;letter-spacing:-0.464px;-webkit-text-stroke:0.45px currentColor;">Mark As Succeeded</div>
<svg class="i" style="left:2280px;top:1392px;width:152px;height:160px;overflow:visible" viewBox="0 0 152 160">
<defs><filter id="sh" x="-30%" y="-30%" width="160%" height="160%"><feGaussianBlur in="SourceAlpha" stdDeviation="7"/><feOffset dy="6"/><feComponentTransfer><feFuncA type="linear" slope="0.22"/></feComponentTransfer><feMerge><feMergeNode/><feMergeNode in="SourceGraphic"/></feMerge></filter></defs>
<path d="M136.00,75.80 L135.91,85.54 L135.66,91.24 L135.23,95.98 L134.63,100.17 L133.86,103.95 L132.92,107.43 L131.80,110.63 L130.51,113.60 L129.05,116.35 L127.42,118.90 L125.61,121.25 L123.62,123.42 L121.45,125.41 L119.10,127.22 L116.55,128.85 L113.80,130.31 L110.83,131.60 L107.63,132.72 L104.15,133.66 L100.37,134.43 L96.18,135.03 L91.44,135.46 L85.74,135.71 L76.00,135.80 L66.26,135.71 L60.56,135.46 L55.82,135.03 L51.63,134.43 L47.85,133.66 L44.37,132.72 L41.17,131.60 L38.20,130.31 L35.45,128.85 L32.90,127.22 L30.55,125.41 L28.38,123.42 L26.39,121.25 L24.58,118.90 L22.95,116.35 L21.49,113.60 L20.20,110.63 L19.08,107.43 L18.14,103.95 L17.37,100.17 L16.77,95.98 L16.34,91.24 L16.09,85.54 L16.00,75.80 L16.09,66.06 L16.34,60.36 L16.77,55.62 L17.37,51.43 L18.14,47.65 L19.08,44.17 L20.20,40.97 L21.49,38.00 L22.95,35.25 L24.58,32.70 L26.39,30.35 L28.38,28.18 L30.55,26.19 L32.90,24.38 L35.45,22.75 L38.20,21.29 L41.17,20.00 L44.37,18.88 L47.85,17.94 L51.63,17.17 L55.82,16.57 L60.56,16.14 L66.26,15.89 L76.00,15.80 L85.74,15.89 L91.44,16.14 L96.18,16.57 L100.37,17.17 L104.15,17.94 L107.63,18.88 L110.83,20.00 L113.80,21.29 L116.55,22.75 L119.10,24.38 L121.45,26.19 L123.62,28.18 L125.61,30.35 L127.42,32.70 L129.05,35.25 L130.51,38.00 L131.80,40.97 L132.92,44.17 L133.86,47.65 L134.63,51.43 L135.23,55.62 L135.66,60.36 L135.91,66.06Z" fill="#000" filter="url(#sh)"/>
<g fill="none" stroke-linejoin="round" stroke-linecap="round">
<path d="M53 92 L51 84 C45 79 44 73 44.5 65 C45.5 54 54 49 66 49 C80 49 88.5 55 88.5 66 C88.5 78 82 85.5 66 86 L62 86.5 Z" stroke="#fff" stroke-width="3.8"/>
<path d="M96 72 C103 75 106 80 106 86 C106 91 104 94 100.5 97 L100.5 102 L93 97.5 C86 97.5 81 96 77 93" stroke="#7a7a7a" stroke-width="3.8"/>
</g>
<path d="M100.2 47 L102.4 52.2 L107.6 54.4 L102.4 56.6 L100.2 61.8 L98 56.6 L92.8 54.4 L98 52.2Z" fill="#fff"/>
<path d="M62 95 L63.4 98.4 L66.8 99.8 L63.4 101.2 L62 104.6 L60.6 101.2 L57.2 99.8 L60.6 98.4Z" fill="#7a7a7a"/>
</svg>
</body></html>
